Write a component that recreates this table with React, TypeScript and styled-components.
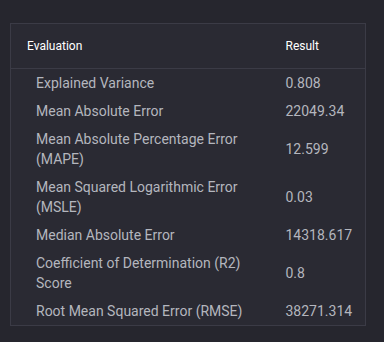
import styled, { createGlobalStyle } from 'styled-components'

const GlobalStyle = createGlobalStyle`
  html, body {
    margin: 0;
    background: #26262e;
  }
  body {
    font-family: Roboto, "Liberation Sans", sans-serif;
  }
`

const Page = styled.div`
  padding: 23px 18px 16px 10px;
`

const Table = styled.table`
  width: 356px;
  border-collapse: collapse;
  table-layout: fixed;
  background: #2a2a33;
  border: 1px solid #3b3b46;
`

const HeadCell = styled.th<{ $indent?: number }>`
  height: 44px;
  padding: 0 16px 0 ${(p) => p.$indent ?? 16}px;
  text-align: left;
  vertical-align: middle;
  font-size: 12px;
  font-weight: 400;
  color: #ffffff;
  border-bottom: 1px solid #3b3b46;
`

const Cell = styled.td<{ $indent?: number }>`
  padding: 4px 16px 4px ${(p) => p.$indent ?? 16}px;
  font-size: 14px;
  line-height: 20px;
  color: #b4b6be;
  vertical-align: middle;
`

type Metric = {
  name: string
  value: string
}

const metrics: Metric[] = [
  { name: 'Explained Variance', value: '0.808' },
  { name: 'Mean Absolute Error', value: '22049.34' },
  { name: 'Mean Absolute Percentage Error (MAPE)', value: '12.599' },
  { name: 'Mean Squared Logarithmic Error (MSLE)', value: '0.03' },
  { name: 'Median Absolute Error', value: '14318.617' },
  { name: 'Coefficient of Determination (R2) Score', value: '0.8' },
  { name: 'Root Mean Squared Error (RMSE)', value: '38271.314' },
]

export default function App() {
  return (
    <Page>
      <GlobalStyle />
      <Table>
        <colgroup>
          <col style={{ width: 259 }} />
          <col />
        </colgroup>
        <thead>
          <tr>
            <HeadCell>Evaluation</HeadCell>
            <HeadCell>Result</HeadCell>
          </tr>
        </thead>
        <tbody>
          {metrics.map((m) => (
            <tr key={m.name}>
              <Cell $indent={25}>{m.name}</Cell>
              <Cell>{m.value}</Cell>
            </tr>
          ))}
        </tbody>
      </Table>
    </Page>
  )
}
